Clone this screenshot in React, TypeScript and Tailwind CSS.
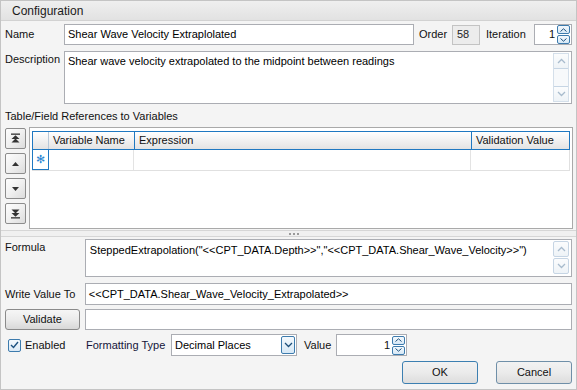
import React from "react";

function ChevUp({ c = "#8aa2bb" }: { c?: string }) {
  return (
    <svg width="9" height="6" viewBox="0 0 9 6">
      <path d="M1 5 L4.5 1.5 L8 5" fill="none" stroke={c} strokeWidth="1.3" />
    </svg>
  );
}
function ChevDown({ c = "#8aa2bb" }: { c?: string }) {
  return (
    <svg width="9" height="6" viewBox="0 0 9 6">
      <path d="M1 1 L4.5 4.5 L8 1" fill="none" stroke={c} strokeWidth="1.3" />
    </svg>
  );
}

function SpinBtns() {
  return (
    <div className="flex flex-col gap-[1px] mr-[1px]">
      <div className="w-[13px] h-[9px] border border-[#3d7bad] rounded-[2px] bg-gradient-to-b from-[#f4f9fd] to-[#d6e8f6] flex items-center justify-center">
        <svg width="7" height="4" viewBox="0 0 7 4"><path d="M0.5 3.5 L3.5 0.8 L6.5 3.5" fill="none" stroke="#1d4f7a" strokeWidth="1" /></svg>
      </div>
      <div className="w-[13px] h-[9px] border border-[#3d7bad] rounded-[2px] bg-gradient-to-b from-[#f4f9fd] to-[#d6e8f6] flex items-center justify-center">
        <svg width="7" height="4" viewBox="0 0 7 4"><path d="M0.5 0.5 L3.5 3.2 L6.5 0.5" fill="none" stroke="#1d4f7a" strokeWidth="1" /></svg>
      </div>
    </div>
  );
}

function NavBtn({ children }: { children: React.ReactNode }) {
  return (
    <div className="w-[21px] h-[21px] border border-[#8c8c8c] rounded-[2px] bg-gradient-to-br from-[#fdfdfd] via-[#f0f0f0] to-[#dcdcdc] flex items-center justify-center">
      {children}
    </div>
  );
}

export default function App() {
  const ta = "bg-white border border-[#abadb3]";
  return (
    <div className="w-[577px] h-[390px] bg-[#f4f4f4] border border-[#c4c4c4] flex flex-col font-['Liberation_Sans',Arial,sans-serif] text-[11px] text-[#111] leading-none overflow-hidden">
      {/* header */}
      <div className="h-[20px] shrink-0 bg-gradient-to-b from-[#efefef] to-[#e2e2e2] border-b border-[#d2d2d2] flex items-center pl-[11px] text-[12px] text-[#1a1a1a]">
        Configuration
      </div>

      {/* Name row */}
      <div className="flex items-center mt-[3px] h-[21px] pl-[4px] pr-[4px]">
        <div className="w-[59px]">Name</div>
        <div className={`${ta} h-[21px] w-[350px] flex items-center pl-[3px] text-black`}>Shear Wave Velocity Extraplolated</div>
        <div className="ml-[5px] w-[33px]">Order</div>
        <div className="h-[20px] w-[28px] bg-[#ececec] border border-[#c3c3c3] flex items-center pl-[4px] text-[#222]">58</div>
        <div className="ml-[6px] w-[48px]">Iteration</div>
        <div className={`${ta} h-[21px] w-[38px] flex items-center justify-end gap-[1px]`}>
          <span className="mr-[1px]">1</span>
          <SpinBtns />
        </div>
      </div>

      {/* Description */}
      <div className="flex mt-[6px] pl-[4px] pr-[4px]">
        <div className="w-[59px] pt-[3px]">Description</div>
        <div className={`${ta} h-[53px] w-[509px] flex`}>
          <div className="flex-1 pl-[3px] pt-[4px] text-black">Shear wave velocity extrapolated to the midpoint between readings</div>
          <div className="w-[16px] my-[1px] mr-[2px] border border-[#d4dfea] bg-[#f7f9fb] flex flex-col justify-between">
            <div className="h-[15px] border-b border-[#c6d5e4] bg-gradient-to-b from-[#fbfcfd] to-[#eef3f7] flex items-center justify-center"><ChevUp c="#a8bbcd" /></div>
            <div className="h-[15px] border-t border-[#c6d5e4] bg-gradient-to-b from-[#fbfcfd] to-[#eef3f7] flex items-center justify-center"><ChevDown c="#a8bbcd" /></div>
          </div>
        </div>
      </div>

      {/* Table label */}
      <div className="mt-[6px] pl-[4px] h-[12px] flex items-center">Table/Field References to Variables</div>

      {/* Table area */}
      <div className="flex mt-[5px] pl-[4px] pr-[3px]">
        <div className="flex flex-col gap-[4px] pt-[1px] w-[24px]">
          <NavBtn>
            <svg width="11" height="11" viewBox="0 0 11 11"><rect x="1" y="0.5" width="9" height="1.3" fill="#333" /><path d="M5.5 2.2 L9.5 6 L1.5 6 Z" fill="#333" /><path d="M5.5 5.5 L9.5 9.5 L1.5 9.5 Z" fill="#333" /></svg>
          </NavBtn>
          <NavBtn>
            <svg width="9" height="6" viewBox="0 0 9 6"><path d="M4.5 1 L8 5 L1 5 Z" fill="#333" /></svg>
          </NavBtn>
          <NavBtn>
            <svg width="9" height="6" viewBox="0 0 9 6"><path d="M4.5 5 L8 1 L1 1 Z" fill="#333" /></svg>
          </NavBtn>
          <NavBtn>
            <svg width="11" height="11" viewBox="0 0 11 11"><path d="M5.5 5.5 L9.5 1.5 L1.5 1.5 Z" fill="#333" /><path d="M5.5 8.8 L9.5 5 L1.5 5 Z" fill="#333" /><rect x="1" y="9.2" width="9" height="1.3" fill="#333" /></svg>
          </NavBtn>
        </div>
        <div className="w-[545px] h-[102px] bg-white border border-[#a9a9a9] pt-[3px] pl-[2px]">
          <div className="w-[538px]">
            <div className="flex h-[19px] border border-[#1f78c1] bg-gradient-to-b from-[#ffffff] to-[#e3e3e3]">
              <div className="w-[16px] border-r border-[#b8c8d8]" />
              <div className="w-[86px] border-r border-[#1f78c1] flex items-center pl-[4px]">Variable Name</div>
              <div className="w-[337px] border-r border-[#1f78c1] flex items-center pl-[4px]">Expression</div>
              <div className="flex-1 flex items-center pl-[4px]">Validation Value</div>
            </div>
            <div className="flex h-[21px] border-b border-[#e0e0e0] border-r">
              <div className="w-[17px] border border-t-0 border-[#1f78c1] flex items-center justify-center text-[#2a86d3] text-[11px]">✻</div>
              <div className="w-[85px] border-r border-[#e3e3e3]" />
              <div className="w-[337px] border-r border-[#e3e3e3]" />
              <div className="flex-1" />
            </div>
          </div>
        </div>
      </div>

      {/* splitter */}
      <div className="mt-[1px] h-[7px] border-t border-b border-[#d6d6d6] bg-[#f0f0f0] flex items-center justify-center gap-[2px] pl-[10px]">
        <div className="w-[2px] h-[2px] bg-[#9a9a9a]" />
        <div className="w-[2px] h-[2px] bg-[#9a9a9a]" />
        <div className="w-[2px] h-[2px] bg-[#9a9a9a]" />
      </div>

      {/* Formula */}
      <div className="flex mt-[2px] pl-[4px] pr-[4px]">
        <div className="w-[80px] pt-[3px]">Formula</div>
        <div className={`${ta} h-[38px] w-[488px] flex`}>
          <div className="flex-1 pl-[4px] pt-[5px] text-black whitespace-nowrap">SteppedExtrapolation("&lt;&lt;CPT_DATA.Depth&gt;&gt;","&lt;&lt;CPT_DATA.Shear_Wave_Velocity&gt;&gt;")</div>
          <div className="w-[16px] my-[1px] mr-[2px] flex flex-col gap-[1px]">
            <div className="h-[16px] border border-[#c6d5e4] rounded-[2px] bg-gradient-to-b from-[#fbfcfd] to-[#eef3f7] flex items-center justify-center"><ChevUp c="#a8bbcd" /></div>
            <div className="h-[16px] border border-[#c6d5e4] rounded-[2px] bg-gradient-to-b from-[#fbfcfd] to-[#eef3f7] flex items-center justify-center"><ChevDown c="#a8bbcd" /></div>
          </div>
        </div>
      </div>

      {/* Write Value To */}
      <div className="flex items-center mt-[6px] pl-[4px] pr-[4px]">
        <div className="w-[80px]">Write Value To</div>
        <div className={`${ta} h-[22px] w-[488px] flex items-center pl-[3px] text-black`}>&lt;&lt;CPT_DATA.Shear_Wave_Velocity_Extrapolated&gt;&gt;</div>
      </div>

      {/* Validate */}
      <div className="flex items-center mt-[4px] pl-[4px] pr-[4px]">
        <div className="w-[75px] h-[21px] border border-[#8a8a8a] rounded-[3px] bg-gradient-to-b from-[#f6f6f6] via-[#ebebeb] to-[#d8d8d8] flex items-center justify-center">Validate</div>
        <div className={`${ta} ml-[5px] h-[21px] w-[488px]`} />
      </div>

      {/* Enabled row */}
      <div className="flex items-center mt-[4px] pl-[7px] pr-[4px] h-[22px]">
        <div className="w-[13px] h-[13px] border border-[#3d7bad] rounded-[2px] bg-gradient-to-b from-[#f4f9fd] to-[#dbe9f5] flex items-center justify-center">
          <svg width="9" height="8" viewBox="0 0 9 8"><path d="M1 4 L3.5 6.5 L8 1" fill="none" stroke="#1c5180" strokeWidth="1.4" /></svg>
        </div>
        <div className="ml-[4px] w-[61px]">Enabled</div>
        <div className="w-[85px] text-[#14143a]">Formatting Type</div>
        <div className={`${ta} h-[22px] w-[126px] flex items-center justify-between pl-[3px] pr-[1px] text-black`}>
          <span>Decimal Places</span>
          <div className="w-[14px] h-[18px] border border-[#3d7bad] rounded-[2px] bg-gradient-to-b from-[#f4f9fd] to-[#d6e8f6] flex items-center justify-center">
            <ChevDown c="#1d4f7a" />
          </div>
        </div>
        <div className="ml-[7px] w-[32px]">Value</div>
        <div className={`${ta} h-[22px] w-[71px] flex items-center justify-end gap-[1px]`}>
          <span className="mr-[1px]">1</span>
          <SpinBtns />
        </div>
      </div>

      {/* Buttons */}
      <div className="flex justify-end mt-[5px] pr-[4px] gap-[18px]">
        <div className="w-[76px] h-[23px] border border-[#3c7fb1] rounded-[3px] bg-gradient-to-b from-[#f2f2f2] via-[#ebebeb] to-[#dddddd] flex items-center justify-center">OK</div>
        <div className="w-[76px] h-[23px] border border-[#6f8fa8] rounded-[3px] bg-gradient-to-b from-[#f2f2f2] via-[#ebebeb] to-[#dddddd] flex items-center justify-center">Cancel</div>
      </div>
    </div>
  );
}
